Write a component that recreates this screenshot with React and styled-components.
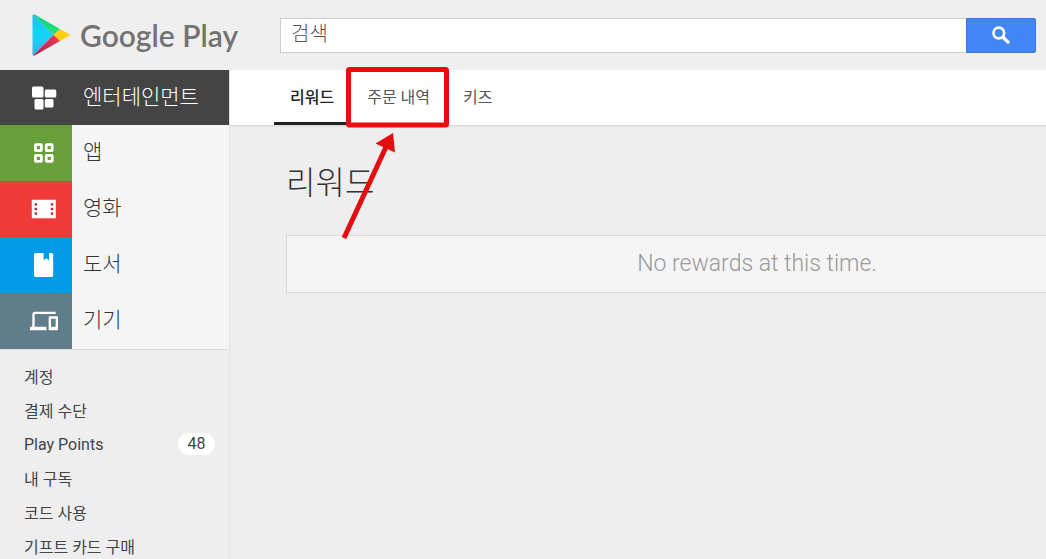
import React from 'react';
import styled, { createGlobalStyle } from 'styled-components';
import { MdDevices } from 'react-icons/md';

const GlobalStyle = createGlobalStyle`
  * {
    box-sizing: border-box;
  }
  body {
    margin: 0;
    background: #eee;
    color: #333;
    font-family: Roboto, 'Noto Sans CJK KR', sans-serif;
    font-size: 16px;
  }
  a {
    color: inherit;
    text-decoration: none;
  }
`

const Page = styled.div`
  height: 100vh;
  overflow: hidden;
  display: flex;
  flex-direction: column;
`
const Header = styled.header`
  flex: none;
  display: flex;
  align-items: center;
  height: 70px;
  padding-right: 10px;
  background: #efefef;
`
const Brand = styled.a`
  display: flex;
  align-items: center;
  gap: 10px;
  width: 280px;
  padding-left: 32px;
  flex: none;
`
const BrandName = styled.span`
  font-family: Lato, sans-serif;
  font-size: 30px;
  font-weight: 600;
  line-height: 40px;
  color: #737373;
  white-space: nowrap;
`
const SearchForm = styled.form`
  flex: 1;
  display: flex;
  height: 35px;
`
const SearchInput = styled.input`
  flex: 1;
  min-width: 0;
  padding: 0 10px 2px;
  border: 1px solid #ccc;
  border-right: 0;
  border-radius: 0;
  background: #fff;
  font: inherit;
  font-size: 20px;
  font-weight: 300;
  color: #444;
  outline: none;

  &::placeholder {
    color: #555;
    opacity: 1;
  }
`
const SearchButton = styled.button`
  width: 70px;
  padding: 0;
  display: flex;
  align-items: center;
  justify-content: center;
  border: 1px solid #3b78e0;
  border-radius: 0 2px 2px 0;
  background: #4285f4;
  color: #fff;
`
const Body = styled.div`
  flex: 1;
  display: flex;
  min-height: 0;
`
const Sidebar = styled.aside`
  flex: none;
  width: 230px;
  border-right: 1px solid #e4e4e4;
`
const Categories = styled.nav`
  background: #f5f5f5;
  border-bottom: 1px solid #ddd;
`
const Category = styled.a`
  display: flex;
  height: ${props => (props.$active ? '55px' : '56px')};
  font-size: 21px;
  font-weight: 300;
  background: ${props => (props.$active ? '#444' : 'transparent')};
  color: ${props => (props.$active ? '#fff' : '#333')};
`
const CategoryIcon = styled.span`
  flex: none;
  display: flex;
  align-items: center;
  justify-content: flex-end;
  width: 72px;
  padding-right: 14px;
  background: ${props => props.$color};
  color: #fff;
`
const CategoryLabel = styled.span`
  padding: 0 0 2px 11px;
  align-self: center;
  line-height: 30px;
`
const AccountLinks = styled.ul`
  list-style: none;
  margin: 0;
  padding: 9px 14px 0 24px;
  color: #444;
`
const AccountItem = styled.li`
  display: flex;
  align-items: center;
  justify-content: space-between;
  height: 34px;
`
const Badge = styled.span`
  min-width: 37px;
  border-radius: 11px;
  background: #fff;
  line-height: 22px;
  text-align: center;
`
const Main = styled.main`
  flex: 1;
  min-width: 0;
`
const Tabs = styled.nav`
  display: flex;
  gap: 1px;
  height: 55px;
  padding-left: 44px;
  background: #fff;
  box-shadow: 0 1px 2px rgba(0, 0, 0, 0.12);
`
const Tab = styled.a`
  position: relative;
  display: flex;
  align-items: center;
  padding: 0 16px;
  border-bottom: 3px solid ${props => (props.$active ? '#222' : 'transparent')};
  color: ${props => (props.$active ? '#222' : '#555')};
  font-weight: ${props => (props.$active ? 500 : 400)};
`
const Callout = styled.svg`
  position: absolute;
  left: -6px;
  top: -4px;
  width: 104px;
  height: 176px;
  overflow: visible;
  pointer-events: none;
`
const Content = styled.section`
  padding: 34px 0 0 56px;
`
const Title = styled.h1`
  margin: 0 0 28px;
  font-size: 32px;
  font-weight: 300;
  line-height: 48px;
`
const Notice = styled.p`
  margin: 0;
  min-width: 942px;
  border: 1px solid #d8d8d8;
  background: #f5f5f5;
  color: #999;
  font-size: 23px;
  font-weight: 300;
  line-height: 56px;
  text-align: center;
`

const PlayLogo = () => (
  <svg width="38" height="42" viewBox="0 0 38 42" aria-hidden="true">
    <defs>
      <linearGradient id="cyan" x1="0" y1="0" x2="0" y2="1">
        <stop offset="0" stopColor="#1cbfe8" />
        <stop offset="0.5" stopColor="#12d6fb" />
        <stop offset="1" stopColor="#3fb0e0" />
      </linearGradient>
      <linearGradient id="green" x1="0" y1="0" x2="1" y2="1">
        <stop offset="0" stopColor="#14c78e" />
        <stop offset="1" stopColor="#1de874" />
      </linearGradient>
      <linearGradient id="red" x1="1" y1="0" x2="0" y2="1">
        <stop offset="0" stopColor="#f1394b" />
        <stop offset="1" stopColor="#a8254f" />
      </linearGradient>
    </defs>
    <path d="M1.2.6Q.5 1 .5 2v38q0 1 .7 1.400L21.500 21z" fill="url(#cyan)" />
    <path d="M1.200.6Q2 0 3.200.7L28 15 21.500 21z" fill="url(#green)" />
    <path d="M28 15l8.800 4.900q1.700 1.100 0 2.200L28 27l-6.500-6z" fill="#ffd012" />
    <path d="M21.500 21L28 27 3.200 41.300q-1.200.7-2 .1z" fill="url(#red)" />
  </svg>
)

const SearchIcon = () => (
  <svg width="20" height="20" viewBox="0 0 20 20" fill="none" stroke="currentColor" aria-hidden="true">
    <circle cx="7.800" cy="8" r="5.300" strokeWidth="2.700" />
    <path d="M11.800 12L18 18.200" strokeWidth="3.200" />
  </svg>
)

const EntertainmentIcon = () => (
  <svg width="28" height="24" viewBox="0 0 28 24" fill="currentColor" aria-hidden="true">
    <rect x="2" y="0.500" width="11.500" height="11" rx="1.500" />
    <rect x="14.800" y="3.500" width="11.500" height="8" rx="1.500" />
    <rect x="4.500" y="13" width="9" height="10.500" rx="1.500" />
    <rect x="14.800" y="13" width="8.700" height="8.500" rx="1.500" />
  </svg>
)

const AppsIcon = () => (
  <svg width="28" height="20" viewBox="0 0 28 20" fill="none" stroke="currentColor" strokeWidth="2.800" aria-hidden="true">
    <rect x="5.400" y="1.700" width="6" height="6" rx="0.600" />
    <rect x="16.200" y="1.700" width="6" height="6" rx="0.600" />
    <rect x="5.400" y="12.300" width="6" height="6" rx="0.600" />
    <rect x="16.200" y="12.300" width="6" height="6" rx="0.600" />
  </svg>
)

const MoviesIcon = () => (
  <svg width="28" height="20" viewBox="0 0 28 20" aria-hidden="true">
    <rect x="1.800" y="0.700" width="24" height="18.600" rx="0.500" fill="currentColor" />
    <g fill="#a8322f">
      {[4.200, 8.800, 13.400].map(y => (
        <React.Fragment key={y}>
          <rect x="4.600" y={y} width="2.400" height="2.400" />
          <rect x="20.800" y={y} width="2.400" height="2.400" />
        </React.Fragment>
      ))}
    </g>
  </svg>
)

const BooksIcon = () => (
  <svg width="28" height="24" viewBox="0 0 28 24" fill="currentColor" aria-hidden="true">
    <path d="M5.500 0H13.600V7.200L16.300 5.200 19 7.200V0H21.500Q23.200 0 23.200 1.700V22.300Q23.200 24 21.500 24H5.500Q4 24 4 22.300V1.700Q4 0 5.500 0z" />
  </svg>
)

const categories = [
  { name: '엔터테인먼트', color: '#444', icon: <EntertainmentIcon />, active: true },
  { name: '앱', color: '#689f38', icon: <AppsIcon /> },
  { name: '영화', color: '#ef3b3a', icon: <MoviesIcon /> },
  { name: '도서', color: '#039be5', icon: <BooksIcon /> },
  { name: '기기', color: '#607d8b', icon: <MdDevices size={28} aria-hidden="true" /> }
]

const accountLinks = [
  { name: '계정' },
  { name: '결제 수단' },
  { name: 'Play Points', count: 48 },
  { name: '내 구독' },
  { name: '코드 사용' },
  { name: '기프트 카드 구매' }
]

const App = () => (
  <Page>
    <GlobalStyle />
    <Header>
      <Brand href="#">
        <PlayLogo />
        <BrandName>Google Play</BrandName>
      </Brand>
      <SearchForm onSubmit={e => e.preventDefault()}>
        <SearchInput type="text" placeholder="검색" aria-label="검색" />
        <SearchButton type="submit" aria-label="검색">
          <SearchIcon />
        </SearchButton>
      </SearchForm>
    </Header>
    <Body>
      <Sidebar>
        <Categories>
          {categories.map(item => (
            <Category key={item.name} href="#" $active={item.active}>
              <CategoryIcon $color={item.color}>{item.icon}</CategoryIcon>
              <CategoryLabel>{item.name}</CategoryLabel>
            </Category>
          ))}
        </Categories>
        <AccountLinks>
          {accountLinks.map(link => (
            <AccountItem key={link.name}>
              <a href="#">{link.name}</a>
              {link.count && <Badge>{link.count}</Badge>}
            </AccountItem>
          ))}
        </AccountLinks>
      </Sidebar>
      <Main>
        <Tabs>
          <Tab href="#" $active>리워드</Tab>
          <Tab href="#">
            주문 내역
            <Callout viewBox="0 0 104 176" aria-hidden="true">
              <rect x="3.500" y="3.500" width="98" height="55.500" rx="1" fill="none" stroke="#ee0a0e" strokeWidth="5" />
              <path d="M-1 172L41 81" stroke="#e50b0e" strokeWidth="5" />
              <path d="M48 67L30.500 77.500 50 86.500z" fill="#e50b0e" />
            </Callout>
          </Tab>
          <Tab href="#">키즈</Tab>
        </Tabs>
        <Content>
          <Title>리워드</Title>
          <Notice>No rewards at this time.</Notice>
        </Content>
      </Main>
    </Body>
  </Page>
)

export default App;
